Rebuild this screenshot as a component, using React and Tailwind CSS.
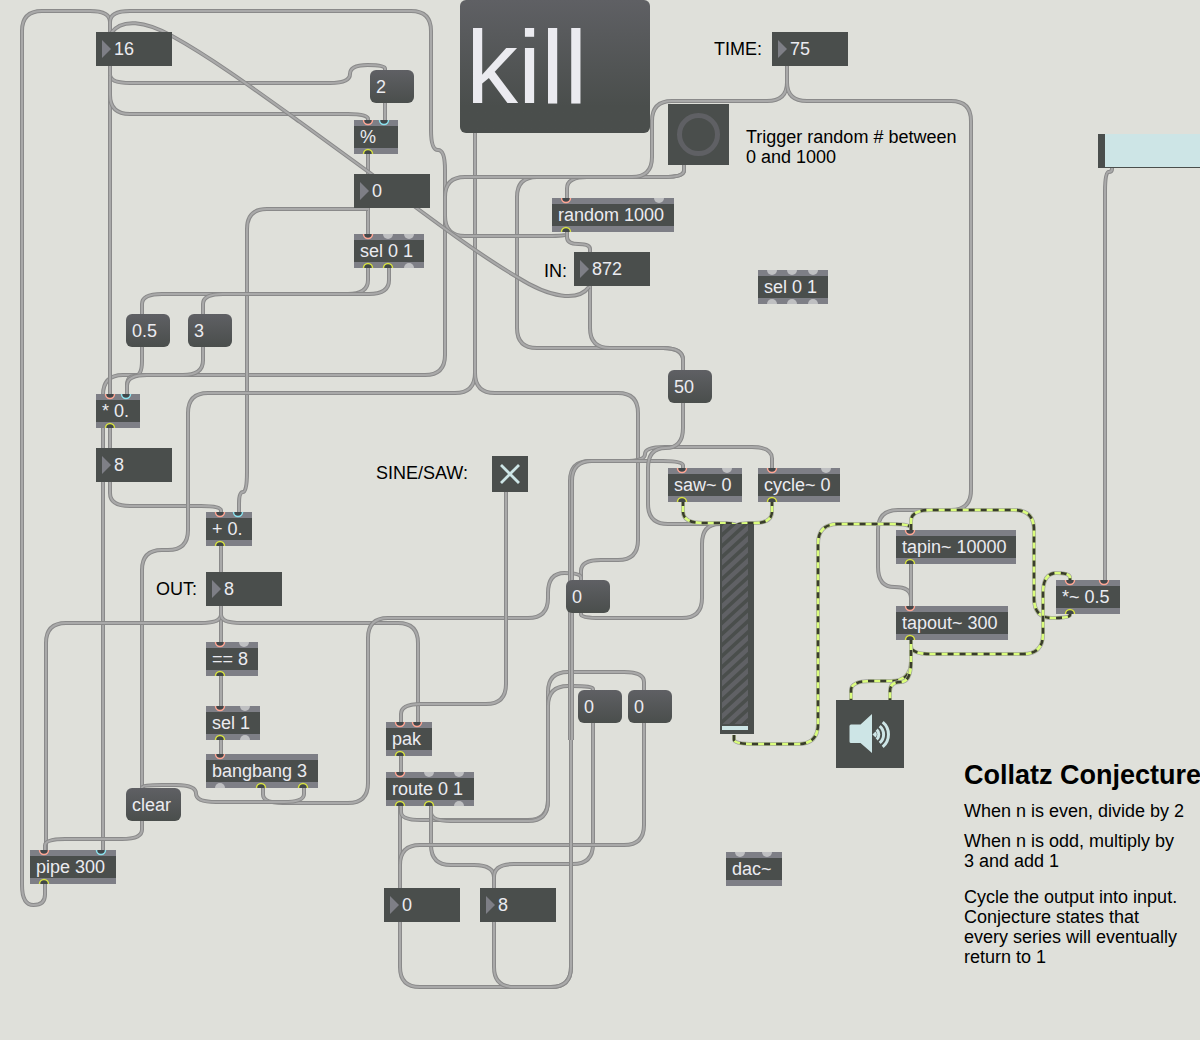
import React from "react";

const INK = "#4a4e4c";

/* Patch cords, as corner points. Corners are rounded when drawn. */
const cords = [
  [[45, 884], [45, 905], [22, 905], [22, 11], [110, 11], [110, 33]],
  [[103, 852], [103, 375], [445, 375], [445, 150], [431, 150], [431, 11], [110, 11], [110, 33]],
  [[110, 66], [110, 396]],
  [[110, 66], [110, 83], [350, 83], [350, 65], [385, 65], [385, 72]],
  [[110, 76], [110, 114], [368, 114], [368, 124]],
  [[385, 102], [385, 124]],
  [[368, 152], [368, 176]],
  [[368, 206], [368, 236]],
  [[368, 209], [247, 209], [247, 492], [239, 492], [239, 515]],
  [[368, 266], [368, 294], [142, 294], [142, 314]],
  [[389, 266], [389, 294], [203, 294], [203, 314]],
  [[142, 346], [142, 376], [127, 376], [127, 396]],
  [[203, 346], [203, 375], [127, 375], [127, 396]],
  [[110, 426], [110, 450]],
  [[110, 480], [110, 506], [221, 506], [221, 515]],
  [[475, 132], [475, 393], [188, 393], [188, 550], [142, 550], [142, 790]],
  [[475, 132], [475, 393], [638, 393], [638, 560], [581, 560], [581, 582]],
  [[221, 544], [221, 574]],
  [[221, 606], [221, 644]],
  [[221, 606], [221, 623], [46, 623], [46, 852]],
  [[221, 606], [221, 623], [418, 623], [418, 724]],
  [[221, 674], [221, 708]],
  [[221, 738], [221, 756]],
  [[263, 786], [263, 803], [368, 803], [368, 618], [548, 618], [548, 573], [581, 573], [581, 582]],
  [[304, 786], [304, 802], [196, 802], [196, 785], [142, 785], [142, 790]],
  [[142, 820], [142, 839], [45, 839], [45, 852]],
  [[506, 492], [506, 704], [401, 704], [401, 724]],
  [[401, 754], [401, 774]],
  [[400, 804], [400, 890]],
  [[401, 804], [401, 820], [548, 820], [548, 672], [644, 672], [644, 692]],
  [[431, 804], [431, 821], [548, 821], [548, 686], [593, 686], [593, 692]],
  [[431, 804], [431, 865], [494, 865], [494, 890]],
  [[593, 722], [593, 864], [494, 864], [494, 890]],
  [[644, 722], [644, 845], [400, 845], [400, 890]],
  [[400, 920], [400, 987], [571, 987], [571, 739]],
  [[494, 920], [494, 987], [571, 987], [571, 739]],
  [[570, 740], [570, 461], [645, 461], [645, 447], [772, 447], [772, 470]],
  [[572, 740], [572, 461], [683, 461], [683, 470]],
  [[683, 402], [683, 448], [648, 448], [648, 524], [737, 524], [737, 530]],
  [[581, 611], [581, 618], [702, 618], [702, 524], [737, 524], [737, 530]],
  [[684, 164], [684, 177], [567, 177], [567, 200]],
  [[684, 164], [684, 177], [517, 177], [517, 348], [683, 348], [683, 372]],
  [[787, 64], [787, 101], [652, 101], [652, 177], [445, 177], [445, 236], [567, 236], [567, 232]],
  [[787, 64], [787, 101], [971, 101], [971, 510], [878, 510], [878, 587], [911, 587], [911, 609]],
  [[567, 230], [567, 244], [590, 244], [590, 254]],
  [[590, 284], [590, 348], [683, 348], [683, 372]],
  [[911, 562], [911, 609]],
  [[1112, 166], [1112, 172], [1105, 172], [1105, 582]],
];

const signals = [
  [[683, 500], [683, 523], [737, 523], [737, 528]],
  [[772, 500], [772, 523], [737, 523], [737, 528]],
  [[734, 735], [734, 744], [818, 744], [818, 524], [911, 524], [911, 532]],
  [[1070, 612], [1070, 618], [1034, 618], [1034, 510], [911, 510], [911, 532]],
  [[911, 638], [911, 654], [1043, 654], [1043, 573], [1070, 573], [1070, 582]],
  [[911, 638], [911, 681], [851, 681], [851, 700]],
  [[911, 638], [911, 682], [890, 682], [890, 700]],
];

const freeCord =
  "M589 287C578 302 550 298 517 277C480 255 440 226 370 173L300 122C250 86 210 57 172 36C145 21 122 18 111 33";

function toPath(points) {
  const dist = (a, b) => Math.abs(a[0] - b[0]) + Math.abs(a[1] - b[1]);
  const toward = (a, b) => {
    const d = dist(a, b);
    const t = d ? Math.min(20, d / 2) / d : 0;
    return [a[0] + (b[0] - a[0]) * t, a[1] + (b[1] - a[1]) * t];
  };
  let d = `M${points[0].join(" ")}`;
  for (let i = 1; i < points.length - 1; i++) {
    const a = toward(points[i], points[i - 1]);
    const b = toward(points[i], points[i + 1]);
    d += `L${a.join(" ")}Q${points[i].join(" ")} ${b.join(" ")}`;
  }
  return d + `L${points[points.length - 1].join(" ")}`;
}

function Cord({ d }) {
  return (
    <g fill="none">
      <path d={d} stroke="#8a8a8a" strokeWidth="4" />
      <path d={d} stroke="#a9a9a9" strokeWidth="2" />
    </g>
  );
}

function Signal({ d }) {
  return (
    <g fill="none">
      <path d={d} stroke="#a3a4a0" strokeWidth="4" />
      <path d={d} stroke="#dafd7c" strokeWidth="2.6" />
      <path d={d} stroke="#393c2c" strokeWidth="2.6" strokeDasharray="6 6" />
    </g>
  );
}

const portColors = { r: "#ffa694", b: "#8be3ef", y: "#d8e242" };

/* kind: r, b or y for a connected port, "-" for an open one */
function Port({ x, kind, bottom }) {
  const open = kind === "-";
  return (
    <svg
      className={bottom ? "absolute bottom-0 h-[6px] w-3" : "absolute top-0 h-[6px] w-3"}
      style={{ left: x - 6 }}
      viewBox="0 0 12 6"
      aria-hidden="true"
    >
      <g transform={bottom ? "matrix(1 0 0 -1 0 6)" : undefined}>
        {open ? (
          <path d="M1 0A5 5 0 0 0 11 0Z" fill="#bfc0c2" />
        ) : (
          <path d="M1.500 0A4.500 4.500 0 0 0 10.500 0" fill="#41474a" stroke={portColors[kind]} strokeWidth="1.5" />
        )}
      </g>
    </svg>
  );
}

const objects = [
  { text: "%", at: "left-[354px] top-[120px] w-[44px]", ins: [[14, "r"], [30, "b"]], outs: [[14, "y"]] },
  { text: "sel 0 1", at: "left-[354px] top-[234px] w-[70px]", ins: [[14, "r"], [34, "-"], [55, "-"]], outs: [[14, "y"], [34, "y"], [55, "-"]] },
  { text: "random 1000", at: "left-[552px] top-[198px] w-[122px]", ins: [[14, "r"], [107, "-"]], outs: [[14, "y"]] },
  { text: "sel 0 1", at: "left-[758px] top-[270px] w-[70px]", ins: [[14, "-"], [34, "-"], [55, "-"]], outs: [[14, "-"], [34, "-"], [55, "-"]] },
  { text: "* 0.", at: "left-[96px] top-[394px] w-[44px]", ins: [[14, "r"], [30, "b"]], outs: [[14, "y"]] },
  { text: "+ 0.", at: "left-[206px] top-[512px] w-[46px]", ins: [[14, "r"], [32, "b"]], outs: [[14, "y"]] },
  { text: "== 8", at: "left-[206px] top-[642px] w-[52px]", ins: [[14, "r"], [38, "-"]], outs: [[14, "y"]] },
  { text: "sel 1", at: "left-[206px] top-[706px] w-[54px]", ins: [[14, "r"], [39, "-"]], outs: [[14, "y"], [39, "-"]] },
  { text: "bangbang 3", at: "left-[206px] top-[754px] w-[112px]", ins: [[14, "r"]], outs: [[14, "-"], [55, "y"], [97, "y"]] },
  { text: "pipe 300", at: "left-[30px] top-[850px] w-[86px]", ins: [[14, "r"], [71, "b"]], outs: [[14, "y"]] },
  { text: "pak", at: "left-[386px] top-[722px] w-[46px]", ins: [[14, "r"], [31, "r"]], outs: [[14, "y"]] },
  { text: "route 0 1", at: "left-[386px] top-[772px] w-[88px]", ins: [[14, "r"], [43, "-"], [73, "-"]], outs: [[14, "y"], [43, "y"], [73, "-"]] },
  { text: "saw~ 0", at: "left-[668px] top-[468px] w-[74px]", ins: [[14, "r"], [59, "-"]], outs: [[14, "y"]] },
  { text: "cycle~ 0", at: "left-[758px] top-[468px] w-[82px]", ins: [[14, "r"], [68, "-"]], outs: [[14, "y"]] },
  { text: "tapin~ 10000", at: "left-[896px] top-[530px] w-[120px]", ins: [[14, "r"]], outs: [[14, "y"]] },
  { text: "tapout~ 300", at: "left-[896px] top-[606px] w-[112px]", ins: [[14, "r"]], outs: [[14, "y"]] },
  { text: "*~ 0.5", at: "left-[1056px] top-[580px] w-[64px]", ins: [[14, "r"], [48, "r"]], outs: [[14, "y"]] },
  { text: "dac~", at: "left-[726px] top-[852px] w-[56px]", ins: [[14, "-"], [41, "-"]], outs: [] },
];

function PatchObject({ text, at, ins, outs }) {
  return (
    <div className={`absolute border-y-[6px] border-[#7e7f86] bg-[#4a4e4c] text-[#ebebf0] ${at}`}>
      <p className="whitespace-nowrap pl-1.5 leading-[22px]">{text}</p>
      <div className="absolute inset-x-0 -inset-y-[6px]">
        {ins.map(([x, kind]) => (
          <Port key={`i${x}`} x={x} kind={kind} />
        ))}
        {outs.map(([x, kind]) => (
          <Port key={`o${x}`} x={x} kind={kind} bottom />
        ))}
      </div>
    </div>
  );
}

const numbers = [
  { id: "seed", label: "Seed", value: "16", at: "left-[96px] top-[32px]" },
  { id: "parity", label: "Remainder", value: "0", at: "left-[354px] top-[174px]" },
  { id: "product", label: "Product", value: "8", at: "left-[96px] top-[448px]" },
  { id: "sine", label: "Sine frequency", value: "0", at: "left-[384px] top-[888px]" },
  { id: "saw", label: "Saw frequency", value: "8", at: "left-[480px] top-[888px]" },
  { id: "time", value: "75", at: "left-[772px] top-[32px]" },
  { id: "in", value: "872", at: "left-[574px] top-[252px]" },
  { id: "out", value: "8", at: "left-[206px] top-[572px]" },
];

function NumberBox({ id, label, value, at }) {
  return (
    <div className={`absolute flex h-[34px] w-[76px] items-center bg-[#4a4e4c] pl-1.5 ${at}`}>
      <svg className="h-[18px] w-[9px] shrink-0" viewBox="0 0 9 18" aria-hidden="true">
        <path d="M0 0L9 9L0 18Z" fill="#7e7f86" />
      </svg>
      <input
        id={id}
        aria-label={label}
        defaultValue={value}
        className="ml-[3px] h-full w-full min-w-0 bg-transparent text-[#ebebf0] outline-none"
      />
    </div>
  );
}

const messages = [
  { text: "2", at: "left-[370px] top-[70px] w-[44px]" },
  { text: "0.5", at: "left-[126px] top-[314px] w-[44px]" },
  { text: "3", at: "left-[188px] top-[314px] w-[44px]" },
  { text: "50", at: "left-[668px] top-[370px] w-[44px]" },
  { text: "0", at: "left-[566px] top-[580px] w-[44px]" },
  { text: "0", at: "left-[578px] top-[690px] w-[44px]" },
  { text: "0", at: "left-[628px] top-[690px] w-[44px]" },
  { text: "clear", at: "left-[126px] top-[788px] w-[55px]" },
];

function Message({ text, at }) {
  return (
    <button
      type="button"
      className={`absolute h-[33px] rounded-[6px] bg-linear-to-b from-[#5f6064] to-[#4a4e4c] pl-1.5 text-left leading-[34px] text-[#ebebf0] ${at}`}
    >
      {text}
    </button>
  );
}

export default function App() {
  return (
    <main className="relative min-h-[1040px] overflow-hidden bg-[#dfe0da] font-['Liberation_Sans',Arial,sans-serif] text-[18px] leading-5 text-black">
      <svg className="absolute inset-0 h-full w-full" aria-hidden="true">
        {cords.map((points, i) => (
          <Cord key={i} d={toPath(points)} />
        ))}
        <Cord d={freeCord} />
        {signals.map((points, i) => (
          <Signal key={i} d={toPath(points)} />
        ))}
      </svg>

      {objects.map((o, i) => (
        <PatchObject key={i} {...o} />
      ))}
      {numbers.map((n) => (
        <NumberBox key={n.id} {...n} />
      ))}
      {messages.map((m, i) => (
        <Message key={i} {...m} />
      ))}

      <button
        type="button"
        className="absolute left-[460px] top-0 h-[133px] w-[190px] rounded-[6px] bg-linear-to-b from-[#5f6064] to-[#4a4e4c] to-80% pl-1.5 text-left text-[104px] leading-[134px] text-[#ebebf0]"
      >
        kill
      </button>

      <button type="button" aria-label="Trigger" className="absolute left-[668px] top-[104px] flex size-[61px] items-center justify-center bg-[#4a4e4c]">
        <span className="size-[43px] rounded-full border-[5px] border-[#5f6064]" />
      </button>

      <label htmlFor="time" className="absolute left-[714px] top-[39px]">TIME:</label>
      <label htmlFor="in" className="absolute left-[544px] top-[261px]">IN:</label>
      <label htmlFor="out" className="absolute left-[156px] top-[579px]">OUT:</label>
      <label htmlFor="wave" className="absolute left-[376px] top-[463px]">SINE/SAW:</label>
      <p className="absolute left-[746px] top-[127px] w-[220px]">Trigger random # between 0 and 1000</p>

      <div className="absolute left-[492px] top-[456px] size-9">
        <input id="wave" type="checkbox" defaultChecked className="peer block size-9 appearance-none bg-[#4a4e4c]" />
        <svg className="pointer-events-none absolute inset-0 hidden size-9 peer-checked:block" viewBox="0 0 36 36" aria-hidden="true">
          <path d="M9 9L27 27M27 9L9 27" stroke="#cde5e6" strokeWidth="2.8" />
        </svg>
      </div>

      <div className="absolute left-[720px] top-[524px] h-[210px] w-[34px] bg-[#4a4e4c] pl-0.5">
        <svg className="block h-[200px] w-[26px]" aria-hidden="true">
          <defs>
            <pattern id="stripes" width="12" height="11" patternUnits="userSpaceOnUse">
              <rect width="12" height="11" fill="#606165" />
              <path d="M-6 16.500L18 -5.500M-12 11L6 -5.500M6 16.500L24 0" stroke={INK} strokeWidth="3.6" />
            </pattern>
          </defs>
          <rect width="26" height="200" fill="url(#stripes)" />
        </svg>
        <div className="mt-0.5 h-1 w-[26px] bg-[#cde5e6]" />
        <input type="range" aria-label="Gain" defaultValue="0" className="absolute inset-0 h-full w-full opacity-0 [writing-mode:vertical-lr]" />
      </div>

      <div className="absolute left-[1098px] right-0 top-[134px] h-[34px] border-b border-l-[7px] border-[#4a4e4c] bg-[#cde5e6]">
        <input type="range" aria-label="Feedback" defaultValue="0" className="absolute inset-0 h-full w-full opacity-0" />
      </div>

      <button type="button" aria-label="Audio on" className="absolute left-[836px] top-[700px] size-[68px] bg-[#4a4e4c]">
        <svg className="block size-[68px]" viewBox="0 0 68 68" aria-hidden="true">
          <path d="M15 24.500H24.500L36 14V53L24.500 43H15Q13.500 43 13.500 41.500V26Q13.500 24.500 15 24.500Z" fill="#cde5e6" />
          <path d="M36.500 34.500L39.500 31.500A4 4 0 0 1 39.500 37.500Z" fill="#cde5e6" />
          <g fill="none" stroke="#cde5e6" strokeWidth="3">
            <path d="M40.700 29.700A6.500 6.500 0 0 1 40.700 39.300" />
            <path d="M43.700 26.100A11 11 0 0 1 43.700 42.900" />
            <path d="M46.700 22.200A16 16 0 0 1 46.700 46.800" />
          </g>
        </svg>
      </button>

      <article className="absolute left-[964px] top-[759px] flex w-[240px] flex-col">
        <h1 className="whitespace-nowrap text-[27px] font-bold leading-8">Collatz Conjecture</h1>
        <p className="mt-2.5">When n is even, divide by 2</p>
        <p className="mt-2.5 w-[216px]">When n is odd, multiply by 3 and add 1</p>
        <p className="mt-4 w-[216px]">Cycle the output into input. Conjecture states that every series will eventually return to 1</p>
      </article>
    </main>
  );
}
